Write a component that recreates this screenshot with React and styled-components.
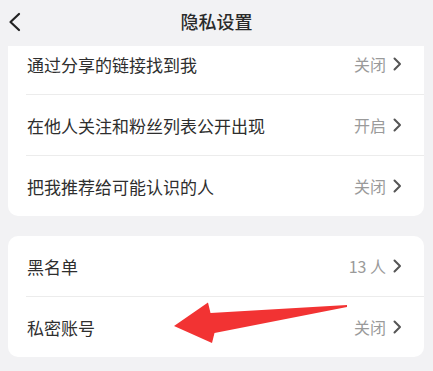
import styled, { createGlobalStyle } from "styled-components"

const GlobalStyle = createGlobalStyle`
  html, body {
    margin: 0;
    padding: 0;
    background: #f2f2f4;
    font-family: "Noto Sans CJK SC", "Noto Sans", sans-serif;
  }
`

const sections = [
  [
    { label: "通过分享的链接找到我", value: "关闭" },
    { label: "在他人关注和粉丝列表公开出现", value: "开启" },
    { label: "把我推荐给可能认识的人", value: "关闭" },
  ],
  [
    { label: "黑名单", value: "13 人" },
    { label: "私密账号", value: "关闭" },
  ],
]

const Chevron = ({ size = 10, color = "#555", width = 2 }) => (
  <svg width={size} height={size * 1.6} viewBox="0 0 10 16" fill="none">
    <path d="M2.5 2.5 L8 8 L2.5 13.5" stroke={color} strokeWidth={width} strokeLinecap="round" strokeLinejoin="round" />
  </svg>
)

const BackIcon = () => (
  <svg width="16" height="20" viewBox="0 0 16 20" fill="none">
    <path d="M12 2 L3.5 10 L12 18" stroke="#222" strokeWidth="2.2" strokeLinecap="round" strokeLinejoin="round" />
  </svg>
)

const App = () => {
  return (
    <>
      <GlobalStyle />
      <Page>
        <Header>
          <BackButton><BackIcon /></BackButton>
          <Title>隐私设置</Title>
        </Header>
        <Scroll>
          {sections.map((rows, i) => (
            <Card key={i} $first={i === 0}>
              {rows.map((row) => (
                <Row key={row.label}>
                  <Label>{row.label}</Label>
                  <Value>{row.value}</Value>
                  <Chevron />
                </Row>
              ))}
            </Card>
          ))}
        </Scroll>
        <Arrow width="180" height="50" viewBox="170 300 180 50">
          <polygon points="174,326 208,302.5 210.5,313 347,305 347,307 214.5,333 212,343" fill="#f23333" />
        </Arrow>
      </Page>
    </>
  )
}

export default App

const Page = styled.div`
  position: relative;
  width: 433px;
  height: 371px;
  overflow: hidden;
  background: #f2f2f4;
`

const Header = styled.div`
  position: relative;
  z-index: 2;
  height: 46px;
  display: flex;
  align-items: center;
  justify-content: center;
  background: #f2f2f4;
`

const BackButton = styled.div`
  position: absolute;
  left: 7px;
  top: 12px;
  display: flex;
`

const Title = styled.div`
  font-size: 18px;
  font-weight: 500;
  color: #2a2a2a;
  margin-top: -4px;
`

const Scroll = styled.div`
  display: flex;
  flex-direction: column;
  gap: 20px;
  padding: 0 9px 0 8px;
`

const Card = styled.div`
  background: #fff;
  border-radius: 10px;
  margin-top: ${(p) => (p.$first ? "-12px" : "0")};
`

const Row = styled.div`
  height: 60px;
  display: flex;
  align-items: center;
  margin-left: 18px;
  padding-right: 22px;
  border-bottom: 1px solid #ececec;

  &:last-child {
    border-bottom: none;
  }

  svg {
    margin-left: 6px;
  }
`

const Label = styled.div`
  flex: 1;
  font-size: 17px;
  color: #2e2e2e;
  padding-left: 1px;
`

const Value = styled.div`
  font-size: 16px;
  color: #9a9a9a;
`

const Arrow = styled.svg`
  position: absolute;
  left: 170px;
  top: 300px;
  z-index: 3;
`
